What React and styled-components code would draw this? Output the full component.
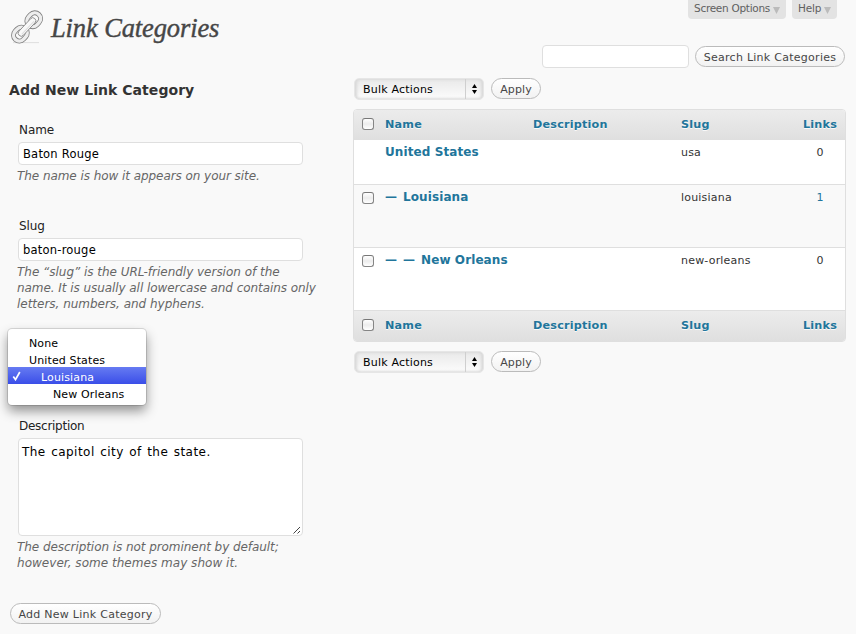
import React from 'react';
import styled, { createGlobalStyle, css } from 'styled-components';

const Global = createGlobalStyle`
  * { box-sizing: border-box; }
  body {
    margin: 0;
    background: #f9f9f9;
    color: #333;
    font-family: "DejaVu Sans", Verdana, sans-serif;
    font-size: 11px;
    overflow: hidden;
  }
  button, input, textarea { font-family: inherit; margin: 0; outline: none; }
`;

const Page = styled.div`
  width: 856px;
  height: 634px;
  overflow: hidden;
`;

const Header = styled.header`
  display: flex;
  justify-content: space-between;
  height: 78px;
  padding: 0 11px 0 10px;
`;

const TitleGroup = styled.div`
  display: flex;
  align-items: flex-start;
  padding-top: 10px;
`;

const Title = styled.h1`
  margin: 0 0 0 7px;
  font: italic 400 26.5px/36px "Liberation Serif", Georgia, serif;
  letter-spacing: -0.12px;
  color: #464646;
  -webkit-text-stroke: 0.4px #464646;
  white-space: nowrap;
`;

const HeaderTools = styled.div`
  display: flex;
  flex-direction: column;
  align-items: flex-end;
`;

const ScreenTabs = styled.div`
  display: flex;
  gap: 6px;
  height: 19px;
  margin-right: 8px;
`;

const ScreenTab = styled.button`
  display: flex;
  align-items: center;
  justify-content: space-between;
  width: ${(p) => p.$width}px;
  height: 19px;
  padding: 0 6px 3px;
  border: 0;
  border-radius: 0 0 4px 4px;
  background: #e3e3e3;
  color: #606060;
  font-size: 10.5px;
  letter-spacing: ${(p) => p.$track || '0'};
  white-space: nowrap;
  svg { margin-top: 4px; }
`;

const SearchBar = styled.div`
  display: flex;
  align-items: center;
  gap: 6px;
  margin-top: 26px;
`;

const Input = styled.input`
  display: block;
  width: ${(p) => p.$width}px;
  height: 23px;
  padding: 1px 4px 0;
  border: 1px solid #dfdfdf;
  border-radius: 4px;
  background: #fff;
  color: #000;
  font-size: 11.5px;
  letter-spacing: 0.22px;
`;

const PillButton = styled.button`
  width: ${(p) => p.$width}px;
  height: 21px;
  padding: 2px 0 0;
  border: 1px solid #bbb;
  border-radius: 11px;
  background: linear-gradient(#fff, #f2f2f2);
  color: #464646;
  font-size: 11px;
  line-height: 17px;
  letter-spacing: ${(p) => p.$track || '0.27px'};
  white-space: nowrap;
`;

const Columns = styled.main`
  display: flex;
`;

const FormColumn = styled.form`
  width: 353px;
  padding-top: 2px;
`;

const FormTitle = styled.h3`
  margin: 0 0 20px 9px;
  font-size: 14px;
  line-height: 20px;
  font-weight: 700;
  letter-spacing: 0.05px;
  color: #333;
`;

const Field = styled.div`
  position: relative;
  height: ${(p) => p.$height}px;
  padding-left: 18px;
`;

const Label = styled.label`
  display: block;
  height: 22px;
  padding-left: 1px;
  font-size: 12px;
  line-height: 20px;
  letter-spacing: ${(p) => p.$track || '-0.1px'};
  color: #222;
`;

const Help = styled.p`
  margin: 3px 0 0 -1px;
  font-size: 12px;
  font-style: italic;
  line-height: 16px;
  color: #666;
  white-space: nowrap;
`;

const HelpLine = styled.span`
  display: block;
  letter-spacing: ${(p) => p.$track || '-0.06px'};
`;

const TextAreaFrame = styled.div`
  position: relative;
  width: 285px;
  height: 98px;
`;

const TextArea = styled.textarea`
  display: block;
  width: 285px;
  height: 98px;
  padding: 5px 3px;
  border: 1px solid #dfdfdf;
  border-radius: 4px;
  background: #fff;
  color: #000;
  font-size: 12px;
  line-height: 16px;
  letter-spacing: 0.46px;
  word-spacing: 1.2px;
  resize: none;
  overflow: hidden;
`;

const Grip = styled.svg`
  position: absolute;
  right: 1px;
  bottom: 1px;
`;

const Menu = styled.ul`
  position: absolute;
  left: 8px;
  top: 1px;
  width: 138px;
  height: 76px;
  margin: 0;
  padding: 4px 0 0;
  list-style: none;
  border-radius: 4px;
  background: #fff;
  box-shadow: 0 0 0 1px rgba(0, 0, 0, 0.12), 0 6px 12px rgba(0, 0, 0, 0.42);
`;

const MenuItem = styled.li`
  display: flex;
  align-items: center;
  height: 17px;
  padding-top: 3px;
  padding-left: ${(p) => 21 + p.$depth * 12}px;
  font-size: 11px;
  letter-spacing: 0.13px;
  color: #000;
  white-space: nowrap;
  ${(p) => p.$selected && css`
    padding-left: 4px;
    color: #fff;
    background: linear-gradient(#667bf2, #3a4ee8);
    svg { margin: -3px 19px 0 0; }
  `}
`;

const ListColumn = styled.section`
  width: 493px;
`;

const ActionBar = styled.div`
  display: flex;
  align-items: flex-start;
  gap: 7px;
  padding-left: 1px;
`;

const Select = styled.div`
  display: flex;
  width: 130px;
  height: 22px;
  padding-right: 1px;
  border: 1px solid #e6e6e6;
  border-radius: 5px;
  background: linear-gradient(#e9e9e9, #fcfcfc);
  box-shadow: inset 2px 0 3px #d8d8d8, inset -2px 0 3px #d8d8d8;
  color: #000;
  font-size: 11px;
  letter-spacing: 0.2px;
`;

const SelectValue = styled.span`
  flex: 1;
  padding-left: 8px;
  line-height: 22px;
`;

const SelectArrows = styled.span`
  display: flex;
  align-items: center;
  justify-content: center;
  width: 17px;
  border-left: 1px solid #cfcfcf;
`;

const Table = styled.div`
  height: 233px;
  margin: 9px 0;
  border: 1px solid #dfdfdf;
  border-radius: 4px;
  overflow: hidden;
  background: #fff;
`;

const gridRow = css`
  display: grid;
  grid-template-columns: 31px 148px 148px 110px 54px;
`;

const HeadRow = styled.div`
  ${gridRow}
  align-items: center;
  height: ${(p) => p.$height}px;
  padding-bottom: 1px;
  background: linear-gradient(#ececec, #dfdfdf);
  border-top: ${(p) => (p.$footer ? '1px solid #dfdfdf' : '0')};
  color: #21759b;
  font-size: 11.2px;
  font-weight: 700;
  letter-spacing: 0.2px;
  text-shadow: 0 1px 0 rgba(255, 255, 255, 0.8);
`;

const BodyRow = styled.div`
  ${gridRow}
  height: ${(p) => p.$height}px;
  padding-top: 4px;
  background: ${(p) => (p.$alt ? '#f9f9f9' : '#fff')};
  border-top: ${(p) => (p.$first ? '0' : '1px solid #dfdfdf')};
  line-height: 16px;
`;

const HeadCell = styled.span`
  padding-left: ${(p) => p.$inset || 0}px;
  white-space: nowrap;
`;

const Cell = styled.span`
  padding-top: 1px;
  letter-spacing: 0.2px;
  white-space: nowrap;
`;

const CountCell = styled.span`
  padding: 1px 0 0 4px;
  text-align: center;
  color: ${(p) => (p.$link ? '#21759b' : '#333')};
`;

const CategoryName = styled.a`
  color: #21759b;
  font-size: 12px;
  font-weight: 700;
  letter-spacing: 0.1px;
  white-space: nowrap;
`;

const Dash = styled.span`
  display: inline-block;
  width: 18px;
`;

const CheckBox = styled.span`
  width: 12px;
  height: 12px;
  margin: ${(p) => p.$top || 0}px 0 ${(p) => (p.$top ? 0 : 2)}px 8px;
  border: 1px solid #858585;
  border-top-color: #777;
  border-radius: 3px;
  background: linear-gradient(#fff, #ececec 50%, #fff);
`;

const Submit = styled.div`
  padding-left: 10px;
`;

const ChainIcon = () => (
  <svg width="34" height="35" viewBox="0 0 34 35" fill="none">
    <path d="M3 32.6h26" stroke="#d5d5d5" strokeWidth="0.8" />
    <g transform="rotate(-47 17 17)">
      <rect x="0" y="11.2" width="14.6" height="11.6" rx="5.8" stroke="#808080" strokeWidth="5" />
      <rect x="0" y="11.2" width="14.6" height="11.6" rx="5.8" stroke="#ededed" strokeWidth="3.4" />
      <rect x="19.6" y="11.2" width="14.6" height="11.6" rx="5.8" stroke="#808080" strokeWidth="5" />
      <rect x="19.6" y="11.2" width="14.6" height="11.6" rx="5.8" stroke="#ededed" strokeWidth="3.4" />
      <rect x="5.5" y="14" width="23" height="6" rx="3" fill="#f8f8f8" stroke="#8c8c8c" strokeWidth="0.9" />
      <path d="M8 18.2h18" stroke="#dcdcdc" />
    </g>
  </svg>
);

const DownArrow = () => (
  <svg width="7" height="7" viewBox="0 0 7 7"><path d="M0 0h7L3.5 7z" fill="#bbb" /></svg>
);

const Check = () => (
  <svg width="10" height="10" viewBox="0 0 10 10" fill="none">
    <path d="M1.3 5.6l2.2 3L7.8 1" stroke="#fff" strokeWidth="1.7" />
  </svg>
);

const BulkActions = () => (
  <ActionBar>
    <Select>
      <SelectValue>Bulk Actions</SelectValue>
      <SelectArrows>
        <svg width="5" height="10" viewBox="0 0 5 10"><path d="M2.5 0L5 4H0zM0 6h5l-2.5 4z" /></svg>
      </SelectArrows>
    </Select>
    <PillButton type="button" $width={50} $track="0.1px">Apply</PillButton>
  </ActionBar>
);

const HeadCells = () => (
  <>
    <CheckBox />
    <HeadCell>Name</HeadCell>
    <HeadCell>Description</HeadCell>
    <HeadCell>Slug</HeadCell>
    <HeadCell $inset={12}>Links</HeadCell>
  </>
);

const categories = [
  { name: 'United States', depth: 0, slug: 'usa', links: 0, height: 44 },
  { name: 'Louisiana', depth: 1, slug: 'louisiana', links: 1, height: 63 },
  { name: 'New Orleans', depth: 2, slug: 'new-orleans', links: 0, height: 63 },
];

export default function App() {
  return (
    <Page>
      <Global />
      <Header>
        <TitleGroup>
          <ChainIcon />
          <Title>Link Categories</Title>
        </TitleGroup>
        <HeaderTools>
          <ScreenTabs>
            <ScreenTab $width={98} $track="-0.28px">Screen Options<DownArrow /></ScreenTab>
            <ScreenTab $width={45} $track="-0.2px">Help<DownArrow /></ScreenTab>
          </ScreenTabs>
          <SearchBar>
            <Input $width={147} />
            <PillButton $width={150}>Search Link Categories</PillButton>
          </SearchBar>
        </HeaderTools>
      </Header>
      <Columns>
        <FormColumn>
          <FormTitle>Add New Link Category</FormTitle>
          <Field $height={96}>
            <Label>Name</Label>
            <Input $width={285} defaultValue="Baton Rouge" />
            <Help><HelpLine>The name is how it appears on your site.</HelpLine></Help>
          </Field>
          <Field $height={112}>
            <Label>Slug</Label>
            <Input $width={285} defaultValue="baton-rouge" />
            <Help>
              <HelpLine $track="-0.02px">The “slug” is the URL-friendly version of the</HelpLine>
              <HelpLine>name. It is usually all lowercase and contains only</HelpLine>
              <HelpLine $track="-0.02px">letters, numbers, and hyphens.</HelpLine>
            </Help>
          </Field>
          <Field $height={88}>
            <Menu>
              <MenuItem $depth={0}>None</MenuItem>
              <MenuItem $depth={0}>United States</MenuItem>
              <MenuItem $depth={1} $selected><Check />Louisiana</MenuItem>
              <MenuItem $depth={2}>New Orleans</MenuItem>
            </Menu>
          </Field>
          <Field $height={187}>
            <Label $track="-0.27px">Description</Label>
            <TextAreaFrame>
              <TextArea defaultValue="The capitol city of the state." />
              <Grip width="9" height="9" viewBox="0 0 9 9">
                <path d="M0.5 7.5L7 1M4.5 7.5L7 5" stroke="#444" fill="none" />
              </Grip>
            </TextAreaFrame>
            <Help>
              <HelpLine>The description is not prominent by default;</HelpLine>
              <HelpLine $track="0.03px">however, some themes may show it.</HelpLine>
            </Help>
          </Field>
          <Submit><PillButton type="button" $width={151}>Add New Link Category</PillButton></Submit>
        </FormColumn>
        <ListColumn>
          <BulkActions />
          <Table>
            <HeadRow $height={30}><HeadCells /></HeadRow>
            {categories.map((c, i) => (
              <BodyRow key={c.slug} $height={c.height} $first={i === 0} $alt={i === 1}>
                {i === 0 ? <span /> : <CheckBox $top={3} />}
                <CategoryName>
                  {Array.from({ length: c.depth }, (_, d) => <Dash key={d}>—</Dash>)}
                  {c.name}
                </CategoryName>
                <span />
                <Cell>{c.slug}</Cell>
                <CountCell $link={c.links > 0}>{c.links}</CountCell>
              </BodyRow>
            ))}
            <HeadRow $height={31} $footer><HeadCells /></HeadRow>
          </Table>
          <BulkActions />
        </ListColumn>
      </Columns>
    </Page>
  );
}
